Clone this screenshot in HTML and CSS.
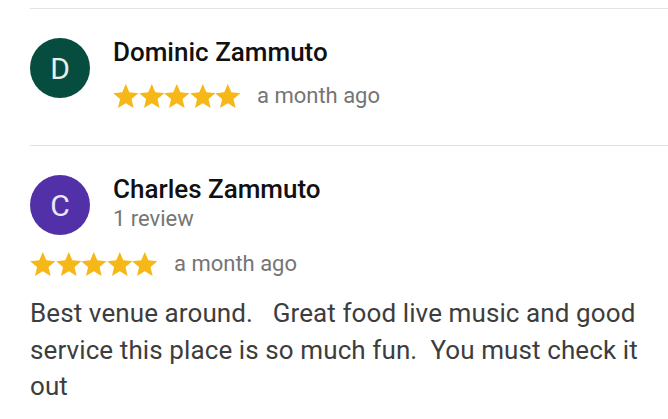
FILE: index.html
```html
<!DOCTYPE html>
<html>
<head>
<meta charset="utf-8">
<link rel="stylesheet" href="styles.css">
</head>
<body>
<div class="reviews">
  <div class="review review-first">
    <div class="head">
      <div class="avatar avatar-green">D</div>
      <div class="meta">
        <div class="name">Dominic Zammuto</div>
        <div class="rating-row">
          <span class="stars">
            <svg viewBox="2 2 20 19"><path d="M12 17.27L18.18 21l-1.64-7.03L22 9.24l-7.19-.61L12 2 9.19 8.63 2 9.24l5.46 4.73L5.82 21z"/></svg><svg viewBox="2 2 20 19"><path d="M12 17.27L18.18 21l-1.64-7.03L22 9.24l-7.19-.61L12 2 9.19 8.63 2 9.24l5.46 4.73L5.82 21z"/></svg><svg viewBox="2 2 20 19"><path d="M12 17.27L18.18 21l-1.64-7.03L22 9.24l-7.19-.61L12 2 9.19 8.63 2 9.24l5.46 4.73L5.82 21z"/></svg><svg viewBox="2 2 20 19"><path d="M12 17.27L18.18 21l-1.64-7.03L22 9.24l-7.19-.61L12 2 9.19 8.63 2 9.24l5.46 4.73L5.82 21z"/></svg><svg viewBox="2 2 20 19"><path d="M12 17.27L18.18 21l-1.64-7.03L22 9.24l-7.19-.61L12 2 9.19 8.63 2 9.24l5.46 4.73L5.82 21z"/></svg>
          </span>
          <span class="date">a month ago</span>
        </div>
      </div>
    </div>
  </div>
  <div class="review">
    <div class="head">
      <div class="avatar avatar-purple">C</div>
      <div class="meta">
        <div class="name">Charles Zammuto</div>
        <div class="sub">1 review</div>
      </div>
    </div>
    <div class="rating-row rating-row-2">
      <span class="stars">
        <svg viewBox="2 2 20 19"><path d="M12 17.27L18.18 21l-1.64-7.03L22 9.24l-7.19-.61L12 2 9.19 8.63 2 9.24l5.46 4.73L5.82 21z"/></svg><svg viewBox="2 2 20 19"><path d="M12 17.27L18.18 21l-1.64-7.03L22 9.24l-7.19-.61L12 2 9.19 8.63 2 9.24l5.46 4.73L5.82 21z"/></svg><svg viewBox="2 2 20 19"><path d="M12 17.27L18.18 21l-1.64-7.03L22 9.24l-7.19-.61L12 2 9.19 8.63 2 9.24l5.46 4.73L5.82 21z"/></svg><svg viewBox="2 2 20 19"><path d="M12 17.27L18.18 21l-1.64-7.03L22 9.24l-7.19-.61L12 2 9.19 8.63 2 9.24l5.46 4.73L5.82 21z"/></svg><svg viewBox="2 2 20 19"><path d="M12 17.27L18.18 21l-1.64-7.03L22 9.24l-7.19-.61L12 2 9.19 8.63 2 9.24l5.46 4.73L5.82 21z"/></svg>
      </span>
      <span class="date">a month ago</span>
    </div>
    <p class="text">Best venue around.&nbsp;&nbsp; Great food live music and good service this place is so much fun.&nbsp; You must check it out</p>
  </div>
</div>
</body>
</html>
```

FILE: styles.css
```css
html, body {
  margin: 0;
  padding: 0;
  background: #ffffff;
}
body {
  font-family: Roboto, "Noto Sans", sans-serif;
  width: 668px;
  height: 419px;
  overflow: hidden;
}
.reviews {
  padding-top: 8px;
  padding-left: 30px;
}
.review {
  border-top: 1px solid #e3e3e3;
}
.review-first {
  height: 136px;
}
.head {
  display: flex;
  align-items: flex-start;
  gap: 23px;
  padding-top: 29px;
}
.avatar {
  width: 60px;
  height: 60px;
  border-radius: 50%;
  color: #e8f0ee;
  font-size: 30px;
  display: flex;
  align-items: center;
  justify-content: center;
  flex-shrink: 0;
}
.avatar-green {
  background: #064d3f;
}
.avatar-purple {
  background: #5231a8;
  color: #ece6f7;
}
.meta {
  display: flex;
  flex-direction: column;
}
.name {
  font-size: 26px;
  font-weight: 500;
  color: #111111;
  line-height: 28px;
}
.rating-row {
  display: flex;
  align-items: center;
  gap: 16px;
  margin-top: 17px;
}
.stars {
  display: flex;
}
.stars svg {
  width: 25.6px;
  height: 24px;
  fill: #f5b818;
  display: block;
}
.date {
  font-size: 22px;
  color: #757575;
}
.sub {
  font-size: 22px;
  color: #757575;
  line-height: 28px;
  margin-top: 2px;
}
.rating-row-2 {
  margin-top: 16px;
}
.text {
  margin: 19px 0 0 0;
  font-size: 26px;
  letter-spacing: 0.1px;
  line-height: 36.5px;
  color: #3d3d3d;
  width: 618px;
}
```
